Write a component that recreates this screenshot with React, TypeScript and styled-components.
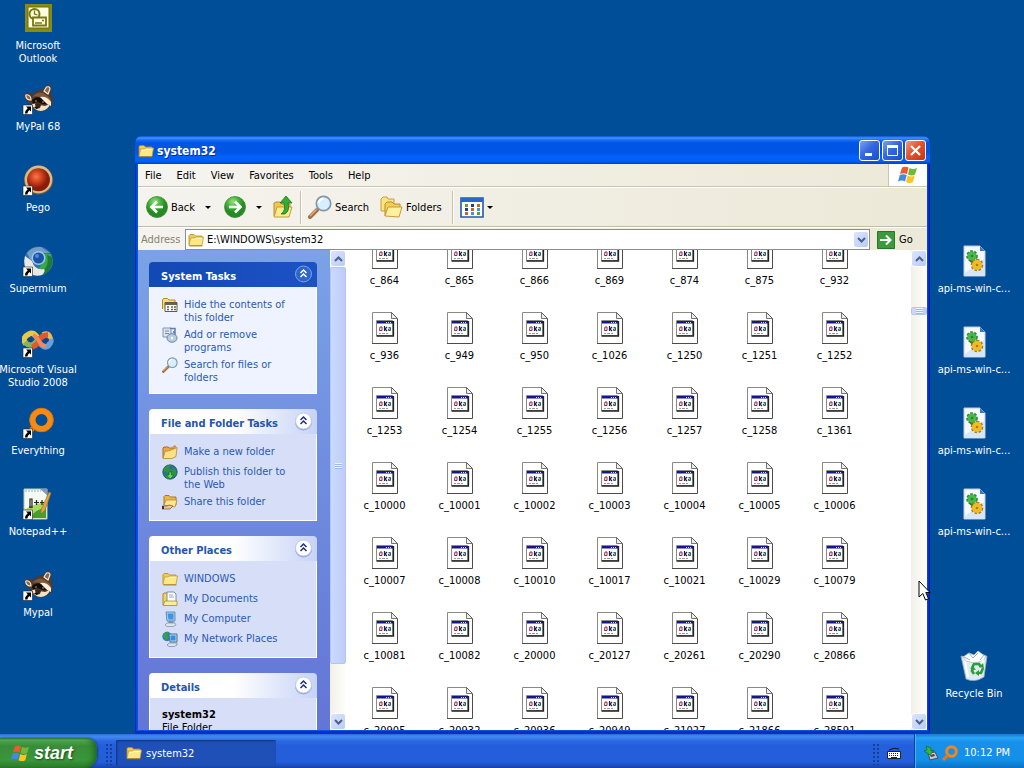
import React from "react";
import styled, { createGlobalStyle, css } from "styled-components";

const uiFont = `"DejaVu Sans Condensed", "Noto Sans", sans-serif`;

const GlobalStyle = createGlobalStyle`
  * { box-sizing: border-box; }
  body { margin: 0; font: 11px/13px ${uiFont}; color: #000; }
  button, input { font: inherit; color: inherit; }
  button { padding: 0; border: 0; background: none; }
  ul, h1, h2, p { margin: 0; padding: 0; font-size: inherit; list-style: none; }
  svg { display: block; flex: none; }
`;

/* ---------- desktop ---------- */

const Screen = styled.div`
  display: flex;
  flex-direction: column;
  height: 100vh;
  overflow: hidden;
  background: #004e98;
`;

const Desktop = styled.main`
  position: relative;
  flex: 1;
  min-height: 0;
  display: flex;
  justify-content: space-between;
`;

const IconColumn = styled.ul`
  display: grid;
  grid-template-columns: 76px;
  grid-auto-rows: 81px;
  align-content: start;
  &:last-of-type { margin-right: 12px; }
`;

const ShortcutCell = styled.li<{ $row?: number }>`
  ${(p) => p.$row && css`grid-row: ${p.$row};`}
`;

const ShortcutButton = styled.button`
  display: flex;
  flex-direction: column;
  align-items: center;
  gap: 5px;
  width: 100%;
  padding-top: 2px;
  color: #fff;
  white-space: pre;
`;

const AppWindow = styled.section`
  position: absolute;
  inset: 136px 94px 0 135px;
  display: flex;
  flex-direction: column;
  padding: 0 3px 4px;
  border-radius: 7px 7px 0 0;
  background: linear-gradient(90deg, #0019cf, #0855dd 2px, #0855dd 3px, #0855dd calc(100% - 3px), #0a32d8 calc(100% - 2px), #001aa8);
  box-shadow: inset 0 -3px 0 #0830c8;
  overflow: hidden;
`;

const TitleBar = styled.header`
  display: flex;
  align-items: center;
  gap: 2px;
  flex: none;
  height: 28px;
  margin: 0 -3px;
  padding: 1px 4px 0 3px;
  background: linear-gradient(#0a4fd0, #3d95ff 2px, #1a6bf5 4px, #0055e5 7px, #0054e3 16px, #0062fb 21px, #0060f8 25px, #0040c8);
`;

const Title = styled.h1`
  flex: 1;
  padding-left: 1px;
  color: #fff;
  font: bold 12px/16px ${uiFont};
  text-shadow: 1px 1px #0a2f8c;
`;

const CaptionButton = styled.button<{ $close?: boolean }>`
  display: grid;
  place-items: center;
  width: 21px;
  height: 21px;
  border: 1px solid #fff;
  border-radius: 3px;
  background: ${(p) =>
    p.$close
      ? "linear-gradient(135deg, #f09a80, #e2532e 45%, #c8340c)"
      : "linear-gradient(135deg, #7ba2f2, #3467e0 45%, #1c4cd0)"};
`;

/* ---------- bars ---------- */

const MenuBar = styled.nav`
  display: flex;
  flex: none;
  height: 23px;
  border-bottom: 1px solid #c9c5b2;
  background: linear-gradient(90deg, #f6f4ef, #ece9d8);
`;

const MenuItems = styled.div`
  display: flex;
  flex: 1;
  gap: 15px;
  padding-left: 7px;
`;

const FlagCell = styled.div`
  display: grid;
  place-items: center;
  width: 39px;
  background: #fff;
  border-left: 1px solid #c9c5b2;
`;

const ToolBar = styled.div`
  display: flex;
  align-items: center;
  flex: none;
  height: 40px;
  padding-left: 8px;
  border-top: 1px solid #fff;
  border-bottom: 1px solid #c0bcaa;
  background: linear-gradient(90deg, #f5f3ee, #ece9d8);
`;

const ToolButton = styled.button<{ $w: number; $before?: number }>`
  display: flex;
  align-items: center;
  gap: 3px;
  width: ${(p) => p.$w}px;
  height: 32px;
  margin-left: ${(p) => p.$before || 0}px;
`;

const Caret = styled.span`
  width: 0;
  border: 3px solid transparent;
  border-top-color: #000;
  border-bottom: 0;
  margin-left: auto;
`;

const BarRule = styled.span`
  width: 2px;
  height: 33px;
  margin: 0 6px;
  border-left: 1px solid #c6c2ae;
  border-right: 1px solid #fff;
`;

const AddressBar = styled.form`
  display: flex;
  align-items: stretch;
  flex: none;
  height: 23px;
  padding-top: 1px;
  border-top: 1px solid #fff;
  background: linear-gradient(90deg, #f5f3ee, #ece9d8);
`;

const AddressLabel = styled.label`
  width: 47px;
  padding: 4px 0 0 3px;
  color: #85826f;
`;

const AddressBox = styled.div`
  display: flex;
  align-items: center;
  gap: 3px;
  flex: 1;
  padding-left: 2px;
  border: 1px solid #8a8d92;
  background: #fff;
`;

const AddressInput = styled.input`
  flex: 1;
  min-width: 0;
  padding: 0;
  border: 0;
  outline: 0;
  background: none;
`;

const GoButton = styled.button`
  display: flex;
  align-items: center;
  gap: 4px;
  width: 57px;
  padding-left: 7px;
`;

/* ---------- window body ---------- */

const Body = styled.div`
  display: flex;
  flex: 1;
  min-height: 0;
  background: #fff;
`;

const SidePane = styled.aside`
  display: flex;
  flex-direction: column;
  gap: 15px;
  flex: none;
  width: 192px;
  padding: 12px 13px 0 11px;
  overflow: hidden;
  background: linear-gradient(#7ba2e7, #6375d6);
`;

const Panel = styled.section`
  flex: none;
`;

const PanelHead = styled.header<{ $primary?: boolean }>`
  display: flex;
  align-items: center;
  justify-content: space-between;
  height: 25px;
  padding: 0 4px 0 12px;
  border-radius: 4px 4px 0 0;
  color: ${(p) => (p.$primary ? "#fff" : "#2456ac")};
  background: ${(p) =>
    p.$primary
      ? "linear-gradient(90deg, #1249b4, #1c52c4)"
      : "linear-gradient(90deg, #fff 50%, #c6d3f7)"};
`;

const PanelTitle = styled.h2`
  padding-top: 3px;
  font-weight: bold;
`;

const PanelBody = styled.div<{ $primary?: boolean }>`
  padding: 10px 12px 6px;
  border: solid #fff;
  border-width: 0 1px 1px;
  background: ${(p) => (p.$primary ? "#eff3ff" : "#d6dff7")};
`;

const TaskItem = styled.li`
  display: flex;
  gap: 6px;
  min-height: 20px;
`;

const TaskLink = styled.a`
  padding: 1px 0 3px;
  color: #2a59b4;
  text-decoration: none;
  white-space: pre;
`;

const ScrollTrack = styled.div`
  display: flex;
  flex-direction: column;
  flex: none;
  width: 16px;
  background: linear-gradient(90deg, #f1f0e8, #fefefb);
`;

const ScrollButton = styled.button`
  display: grid;
  place-items: center;
  flex: none;
  width: 16px;
  height: 17px;
  border: 1px solid #fff;
  border-radius: 3px;
  background: linear-gradient(135deg, #dbe5fe, #b9cbf6);
`;

const ScrollRun = styled.div<{ $before: number; $thumb: number }>`
  display: grid;
  flex: 1;
  grid-template-rows: ${(p) => `${p.$before}fr ${p.$thumb}fr ${446 - p.$before - p.$thumb}fr`};
`;

const Thumb = styled.div`
  display: grid;
  place-items: center;
  grid-row: 2;
  border: 1px solid #b4c6f0;
  border-radius: 2px;
  background: linear-gradient(90deg, #cbd9fd, #bccdf8);
`;

const Grip = styled.span`
  width: 7px;
  height: 6px;
  background: repeating-linear-gradient(#eef4fe 0 1px, #9cb8f0 1px 2px);
`;

const FileArea = styled.div`
  flex: 1;
  min-width: 0;
  overflow: hidden;
`;

const FileGrid = styled.ul`
  display: grid;
  grid-template-columns: repeat(auto-fill, 75px);
  grid-auto-rows: 75px;
  margin-top: -13px;
  padding-left: 1px;
`;

const FileButton = styled.button`
  display: flex;
  flex-direction: column;
  align-items: center;
  gap: 5px;
  width: 100%;
`;

/* ---------- task bar ---------- */

const TaskBar = styled.footer`
  display: flex;
  flex: none;
  height: 34px;
  color: #fff;
  background: linear-gradient(#2b66d0, #4389f0 2px, #3c80ee 4px, #2a68e2 7px, #245edb 12px, #245edb 28px, #1941a5);
`;

const StartButton = styled.button`
  display: flex;
  align-items: center;
  gap: 4px;
  align-self: flex-end;
  width: 97px;
  height: 30px;
  padding: 0 0 0 11px;
  border-radius: 0 10px 12px 0;
  color: #fff;
  font: italic bold 18px/22px "Liberation Sans", sans-serif;
  text-shadow: 1px 1px 2px #1a4a18;
  background: linear-gradient(#2f7a30, #5eac5c 2px, #46a048 4px, #388d38 8px, #3a973a 22px, #2c7c2c);
  box-shadow: inset -5px 0 6px -2px #1e641e, 1px 0 2px #153f9c;
`;

const Dots = styled.span`
  width: 7px;
  margin: 9px 4px 3px 8px;
  background: radial-gradient(circle at 2px 2px, #12409f 1px, transparent 1px) 0 0 / 4px 4px;
`;

const TaskButton = styled.button`
  display: flex;
  align-items: center;
  gap: 4px;
  align-self: flex-end;
  width: 160px;
  height: 26px;
  margin-bottom: 2px;
  padding-left: 10px;
  border-radius: 2px;
  background: #1e50b8;
  box-shadow: inset 1px 1px 2px #0f3388;
`;

const Keyboard = styled.span`
  display: grid;
  place-items: end center;
  width: 34px;
  margin-right: 3px;
  margin-left: -6px;
  padding-bottom: 9px;
`;

const Tray = styled.div`
  display: flex;
  align-items: center;
  gap: 3px;
  width: 110px;
  padding: 3px 0 0 8px;
  border-left: 1px solid #0c3f9e;
  background: linear-gradient(#1877d8, #27a5f4 4px, #1890ec 8px, #1290e8 26px, #0d6fc4);
  box-shadow: inset 1px 0 #3cb8f8;
`;

const Clock = styled.time`
  margin-left: 3px;
`;

const Spacer = styled.span`
  flex: 1;
`;

const Pointer = styled.div`
  position: absolute;
  left: 918px;
  top: 580px;
  pointer-events: none;
`;

/* ---------- drawings ---------- */

const Svg = ({ w, h, box, children }: { w: number; h: number; box?: string; children: React.ReactNode }) => (
  <svg width={w} height={h} viewBox={box || `0 0 ${w} ${h}`} aria-hidden="true">{children}</svg>
);

const Arrow = () => (
  <g>
    <path d="M1 22h9.500v9.500H1z" fill="#fff" stroke="#222" strokeWidth=".6" />
    <path d="M4 23.500H9V28.500L7.500 27Q5.600 28.300 5.400 30.500H3Q3 27.500 5.700 25.300z" fill="#000" />
  </g>
);

const Folder = ({ s = 16 }: { s?: number }) => (
  <Svg w={s} h={s} box="0 0 16 16">
    <path d="M1 13V3.500L2 2.500h4l1.500 1.500H14v3" fill="#f0cc50" stroke="#b48a28" strokeWidth=".8" />
    <path d="M1 13.500 2.500 6h4l1-1h8L14 13.500z" fill="#ffe782" stroke="#c19a35" strokeWidth=".8" />
    <path d="M3.500 7.300h3.200l1-1h6" stroke="#fffbd8" fill="none" />
    <path d="M1.500 14h13" stroke="#8f6a20" strokeWidth=".7" />
  </Svg>
);

const Outlook = () => (
  <Svg w={32} h={32}>
    <path d="M3 2h27v28H3z" fill="#8a8b12" />
    <path d="M6 5h21v21H6z" fill="#fffde0" stroke="#6b6c08" />
    <circle cx="12.500" cy="12" r="5" fill="#fffde0" stroke="#77780c" strokeWidth="2" />
    <path d="M12.500 8.500V12l3 1" stroke="#77780c" fill="none" strokeWidth="1.300" />
    <path d="M11 15.500h13v8H11z" fill="#fffde0" stroke="#77780c" strokeWidth="1.800" />
    <path d="M13 21h7M20 18.500h2" stroke="#77780c" strokeWidth="1.500" />
  </Svg>
);

const Raccoon = () => (
  <Svg w={32} h={32}>
    <path d="M3 13Q3 9 7 10l4 1Q16 6 22 6l3-4q4-1 4 3v6q3 5 1 11-4 5-11 6-8 0-11-8-5-2-5-7z" fill="#54392a" />
    <path d="M4 14Q3 11 6 12q3 1 3 5-4 0-5-3zM24.500 4q3.500-1 3.500 2l-2 5-4-3z" fill="#8a6548" stroke="#f4e6cc" strokeWidth="1.200" />
    <path d="M10 14q6-6 11-4l6 4q3 4 2 7l-7-5q-6-4-12-2z" fill="#7d5a40" />
    <path d="M18 14q7-1 11 5v4l-6-3z" fill="#fbeed4" />
    <path d="M10 17q4-4 9-2l6 6q-4 1-7-1-4-2-7 1z" fill="#120d0b" />
    <path d="M10 21q4-1 7 1l6 1 5-2q-2 6-9 7-7 0-9-7z" fill="#f6e2c2" />
    <path d="M13 21q4-2 6 1l-1 3-4 1z" fill="#3d2418" />
    <path d="M12 24q3-1 4 1-2 2-4-1z" fill="#0d0908" />
    <circle cx="14" cy="18" r=".8" fill="#e0a04a" /><circle cx="21" cy="19" r=".8" fill="#e0a04a" />
    <Arrow />
  </Svg>
);

const Pego = () => (
  <Svg w={32} h={32}>
    <defs><radialGradient id="ball" cx=".4" cy=".35"><stop stopColor="#f8794a" /><stop offset=".5" stopColor="#d0421f" /><stop offset="1" stopColor="#8a1c0c" /></radialGradient></defs>
    <circle cx="16.500" cy="16" r="14.500" fill="#7c5428" /><circle cx="16.500" cy="15.500" r="12.600" fill="none" stroke="#dbb988" strokeWidth="2.600" />
    <circle cx="16.500" cy="16" r="11.300" fill="url(#ball)" /><Arrow />
  </Svg>
);

const Supermium = () => (
  <Svg w={32} h={32}>
    <circle cx="16.500" cy="16" r="14.500" fill="#3a70a0" />
    <path d="M16 9h13q5 14-9 21l-5-4 7-10z" fill="#38a848" />
    <path d="m25 10 5 2q2 12-9 18l-2-3q9-5 6-17z" fill="#1f7a38" />
    <path d="M3 11q-3 11 5 18 6 3 12 1 4-4 2-6-9 2-12-8z" fill="#e8e8e4" />
    <path d="M5 8q5-7 14-6l9 6H14L9 16z" fill="#6f9fc4" />
    <circle cx="16.500" cy="13" r="7" fill="#9cc8ea" /><circle cx="16.500" cy="13" r="5.500" fill="#1a52a8" /><circle cx="15" cy="11" r="2" fill="#4c8ada" />
    <Arrow />
  </Svg>
);

const VisualStudio = () => (
  <Svg w={32} h={32}>
    <g fill="none" strokeWidth="5.500">
      <path d="M16 13Q12 5 7 8-1 12 4 18" stroke="#e5cb45" />
      <path d="M3 16q6 7 12-1" stroke="#87b45c" />
      <path d="M17 16q5 7 9 4 5-5 1-9" stroke="#6ba0dc" />
      <path d="M21 9q6-3 7 4" stroke="#e8b85c" />
      <path d="M10 21q6-2 7-7 3-5 9-5" stroke="#e0582f" />
      <path d="M11 9q4 2 6 6 2 5 7 5" stroke="#f0885a" strokeWidth="4" />
    </g>
    <circle cx="8" cy="14" r="2" fill="#173f82" /><circle cx="25" cy="14" r="2" fill="#173f82" /><Arrow />
  </Svg>
);

const Everything = () => (
  <Svg w={32} h={32}>
    <circle cx="19.500" cy="13" r="9" fill="none" stroke="#f78a14" strokeWidth="6" />
    <circle cx="19.500" cy="13" r="11.800" fill="none" stroke="#d96c08" strokeWidth=".8" />
    <path d="m11 21-5 6" stroke="#f07a10" strokeWidth="5" /><Arrow />
  </Svg>
);

const Notepad = () => (
  <Svg w={32} h={32}>
    <path d="M2 1h23v30H2z" fill="#f6f9f0" stroke="#bcc6ae" />
    <path d="M2 22q9-6 22-8v16H2z" fill="#a8d860" /><path d="M8 30q5-9 16-10v10z" fill="#43a028" />
    <path d="M3 3h16" stroke="#b8d8e8" strokeWidth="2" strokeDasharray="2 1" />
    <path d="M18 1h7v6z" fill="#8498b8" />
    <path d="M8 20V11h2v9M7 19h3M12 14.500h5M14.500 12v5M18 14.500h4M20 12v5" stroke="#222" fill="none" strokeWidth="1.200" />
    <path d="m19 22 8-18 2 1-6 17-4 4z" fill="#e5a23a" stroke="#a06c28" strokeWidth=".6" /><Arrow />
  </Svg>
);

const Gear = ({ x, y, r, c, d }: { x: number; y: number; r: number; c: string; d: string }) => (
  <g>
    <circle cx={x} cy={y} r={r} fill={c} stroke={d} strokeWidth="2.600" strokeDasharray="2.400 1.400" />
    <circle cx={x} cy={y} r={r} fill={c} /><circle cx={x} cy={y} r="1.300" fill={d} />
  </g>
);

const Dll = () => (
  <Svg w={32} h={32}>
    <path d="M6 1h16l5 5v25H6z" fill="#f5f9ff" stroke="#b5cceb" />
    <path d="M22 1v5h5z" fill="#3a77bd" /><path d="M7 28 26 14v16H7z" fill="#d8e6fa" />
    <Gear x={14} y={11} r={4.5} c="#48b848" d="#2a8232" />
    <path d="M10 14q5 3 9 0l1 4-6 1z" fill="#2a8232" />
    <Gear x={19} y={20} r={5} c="#f0bc26" d="#b07e14" />
  </Svg>
);

const RecycleBin = () => (
  <Svg w={32} h={32}>
    <path d="m3 6 13 3 13-3-3 21q-9 6-18 2z" fill="#dfeaf2" stroke="#91a9bc" strokeWidth=".8" />
    <path d="m5 7 6-4 5 2 4-4 4 3 4 2-3 5-9 2-8-2z" fill="#fff" stroke="#aebfca" strokeWidth=".8" />
    <path d="m11 3 4 5 5-5M6 7l6 3M26 5l-4 5" stroke="#9eb0b8" fill="none" />
    <path d="M7 11 10 27M25 10 22 26" stroke="#fff" strokeWidth="2" />
    <g fill="none" stroke="#2b9c37" strokeWidth="2.600"><path d="m14 18 2-4h5l2 3M25 18l-2 5h-3M16 24l-2-3 1-3" /></g>
    <path d="m21 17 5 1-1-5zM21 20v6l-4-3zM12 19l3-3 3 4z" fill="#2b9c37" />
  </Svg>
);

const NlsFile = () => (
  <Svg w={26} h={32}>
    <path d="M.5.500h19l6 6.500v24.500H.5z" fill="#fff" />
    <path d="M.5 31V.500h19" stroke="#8a8a84" fill="none" />
    <path d="M0 31.500h25.500V7" stroke="#4c4c48" fill="none" />
    <path d="M19.500.500V6.500h6zl6 6" stroke="#55554f" fill="#eee" strokeWidth=".8" />
    <path d="M4.500 8.500h16v15h-16z" fill="#fff" stroke="#8c8c84" />
    <path d="M5 9h16v2.500H5z" fill="#14168c" /><path d="M14 10h1v1h-1zM16 10h1v1h-1zM18 10h1v1h-1z" fill="#dde" />
    <path d="M4.500 24h17V9" stroke="#222" fill="none" strokeWidth="1.300" />
    <path d="M8 15h2v3.500H7.500z" stroke="#8c2b42" fill="none" />
    <path d="M12.500 14v5M15 15l-2 2 2 2" stroke="#202050" fill="none" strokeWidth="1.200" />
    <path d="M16.500 15.500h2v3h-2v-1.500h2" stroke="#28625e" fill="none" />
    <path d="M7 21.500h2m1 0h3m1 0h2" stroke="#999" />
  </Svg>
);

const RoundArrow = ({ back }: { back?: boolean }) => (
  <Svg w={22} h={22}>
    <defs><radialGradient id="green" cx=".4" cy=".25"><stop stopColor="#9be07e" /><stop offset=".5" stopColor="#4cb840" /><stop offset="1" stopColor="#268a24" /></radialGradient></defs>
    <circle cx="11" cy="11" r="10.500" fill="url(#green)" stroke="#3d8a36" strokeWidth=".8" />
    <path d={back ? "M17 11H6M11 5.500 5.500 11 11 16.500" : "M5 11h11M11 5.500 16.500 11 11 16.500"} stroke="#fff" strokeWidth="2.600" fill="none" />
  </Svg>
);

const UpFolder = () => (
  <Svg w={22} h={24}>
    <path d="M2 21V8l2-1h4l2 2h8v4" fill="#efc94f" stroke="#b78e2c" /><path d="m2 22 3-10h15l-3 10z" fill="#ffeb92" stroke="#c39b3a" />
    <path d="M9 19q5-3 3-11H8l6-7 6 7h-4q2 8-3 11z" fill="#35ad32" stroke="#1a7420" strokeWidth=".8" />
  </Svg>
);

const Magnifier = ({ s = 24 }: { s?: number }) => (
  <Svg w={s} h={s} box="0 0 24 24">
    <path d="m9 15-7 7" stroke="#a57243" strokeWidth="4" strokeLinecap="round" /><path d="m8.500 14.500-6.500 6.500" stroke="#e4b384" strokeWidth="1.300" />
    <circle cx="15.500" cy="8.500" r="7.200" fill="#d7effb" stroke="#8196aa" strokeWidth="1.700" />
    <path d="M10.500 8q1-4 5-4.500" stroke="#fff" strokeWidth="2" fill="none" />
  </Svg>
);

const FoldersIcon = () => (
  <Svg w={23} h={22}>
    <path d="M1 15V3l2-2h4l1 2h6v12z" fill="#fbe283" stroke="#c8a040" />
    <path d="M5 20V8l2-2h5l2 2h6v4" fill="#f3cf58" stroke="#b78e2c" /><path d="m5 20 3-9h14l-3 10z" fill="#fff0a0" stroke="#c39b3a" />
  </Svg>
);

const ViewsIcon = () => (
  <Svg w={24} h={21}>
    <path d="M1 1h22v19H1z" fill="#fff" stroke="#2059ad" strokeWidth="1.600" /><path d="M1 1h22v4H1z" fill="#2868c8" />
    {[5, 11, 17].map((x, i) => [7, 11, 15].map((y, j) => <path key={`${x}-${y}`} d={`M${x} ${y}h3v3h-3z`} fill={["#6a9a40", "#253f88", "#b36d30", "#5b8cd0"][(i + j) % 4]} />))}
  </Svg>
);

const Flag = ({ s = 20 }: { s?: number }) => (
  <Svg w={s} h={s} box="0 0 20 20">
    <path d="M4 2.500q3.500-1.700 6.500 0L9 9Q6 7.500 2 9z" fill="#ee5a2c" /><path d="M11.500 3q3.500 2 7.500 0l-2 6.500q-3 2-7 0z" fill="#70b83c" />
    <path d="M1.800 10q3.500-1.700 7 0L7 16.500q-3-1.800-7 0z" fill="#4489e8" /><path d="M9.700 10.500q3.600 2 7 0L15 17q-3 2-7 0z" fill="#fbc524" />
  </Svg>
);

const Chevrons = ({ primary }: { primary?: boolean }) => (
  <Svg w={19} h={19}>
    <circle cx="9.500" cy="10" r="8.500" fill={primary ? "#184cae" : "#8fa4d8"} />
    <circle cx="9.500" cy="9" r="8" fill={primary ? "#2e66cc" : "#fff"} stroke={primary ? "#7fa4ea" : "#c4cde8"} />
    <path d="m6.500 8 3-3 3 3M6.500 12l3-3 3 3" stroke={primary ? "#fff" : "#1d2f78"} strokeWidth="1.500" fill="none" />
  </Svg>
);

const Tick = ({ up }: { up?: boolean }) => (
  <Svg w={9} h={6}><path d={up ? "m1 5 3.500-3.500L8 5" : "m1 1 3.500 3.500L8 1"} stroke="#4d6185" strokeWidth="2" fill="none" /></Svg>
);

const HideIcon = () => (
  <Svg w={16} h={16}><path d="M.5 12V3l1-1.500h4L7 3h6v9" fill="#f6dd76" stroke="#b08a2e" />
    <path d="M3 5.500h12v9H3z" fill="#fff" stroke="#5f5b48" /><path d="M3 6h12v2H3z" fill="#67634f" /><path d="M5 10h2m2 0h2m1 0h2M5 12.500h2m2 0h2m1 0h2" stroke="#67634f" strokeWidth="1.500" /></Svg>
);
const ProgramsIcon = () => (
  <Svg w={16} h={16}><path d="M1 1h8v9H1z" fill="#dde4ee" stroke="#8294a8" /><path d="M3 4h4M3 6.500h4" stroke="#7088a8" />
    <ellipse cx="10" cy="11" rx="5" ry="4.300" fill="#b7cde2" stroke="#6d86a0" /><circle cx="10" cy="11" r="1.300" fill="#fff" /><path d="M8 1.500h5v5l-2-2" stroke="#5b7fae" fill="none" strokeWidth="1.500" /></Svg>
);
const NewFolderIcon = () => (
  <Svg w={16} h={16}><path d="M1 14V4l1-1h4l1.500 1H13v3" fill="#e8a848" stroke="#a46c20" /><path d="m1 14.500 2-7 5-1 7-3-1 9-4 2z" fill="#ffe083" stroke="#b98730" strokeWidth=".8" /><path d="m10 3 3-2 2 3" fill="#d98a38" /></Svg>
);
const GlobeIcon = () => (
  <Svg w={16} h={16}><circle cx="8" cy="8" r="7.300" fill="#2b6f98" stroke="#1b4a50" strokeWidth=".6" /><path d="M2 4q4-4 7-3l-2 3 3 2-4 3-4-1zM11 3l3 3 .5 4-3 3-2-3zM4 10l4 2-1 3q-3-1-4-4z" fill="#2f9245" /><path d="m8 15-3.500-4H7V8h2.500v3H12z" fill="#5ddd52" stroke="#18702a" strokeWidth=".7" /></Svg>
);
const ShareIcon = () => (
  <Svg w={16} h={16}><path d="M2 11V2.500L3 1.500h4L8.500 3H14v8" fill="#e8b84a" stroke="#a5782a" /><path d="m2 11 2-5h11l-2 7z" fill="#ffe68c" stroke="#b98730" strokeWidth=".8" /><path d="M0 12h5l2-1 4 1-3 3H0z" fill="#efc69c" stroke="#704d30" strokeWidth=".7" /><path d="M0 12h2v3H0z" fill="#3d3230" /></Svg>
);
const DocsIcon = () => (
  <Svg w={16} h={16}><path d="M1 14V3l1-1h3l1 2v10" fill="#f3d264" stroke="#af862d" /><path d="M5 1h7l2 2v9H5z" fill="#fff" stroke="#798ca8" /><path d="M7 4h4M7 6h5" stroke="#90a8cc" /><path d="M1 14.500 3 10h12v4.500z" fill="#ffeb9c" stroke="#af862d" strokeWidth=".8" /></Svg>
);
const ComputerIcon = () => (
  <Svg w={16} h={16}><path d="M4 1h9v9H5z" fill="#9ed0f4" stroke="#6c8fb0" /><path d="M5.500 2.500h6v6h-5z" fill="#3f95e4" /><path d="M7 10h4l1 2H6z" fill="#7491b0" /><path d="m3 14 2-2h8l1 2-3 1.500H5z" fill="#dae4ed" stroke="#7e8fa2" strokeWidth=".7" /></Svg>
);
const NetworkIcon = () => (
  <Svg w={16} h={16}><circle cx="5" cy="5.500" r="4.700" fill="#2f7cc4" /><path d="M1 4q3-4 6-3L5 4l2 2-3 3-3-3z" fill="#34a345" /><path d="M7 3h8v8H8z" fill="#b0dcf8" stroke="#51708f" /><path d="M8.500 4.500h5v5h-5z" fill="#358fdc" /><path d="m5 14 2-2h8v2l-3 1.500H7z" fill="#dae4ed" stroke="#71849a" strokeWidth=".7" /></Svg>
);

/* ---------- data ---------- */

const leftShortcuts = [
  { name: "Microsoft\nOutlook", icon: <Outlook /> },
  { name: "MyPal 68", icon: <Raccoon /> },
  { name: "Pego", icon: <Pego /> },
  { name: "Supermium", icon: <Supermium /> },
  { name: "Microsoft Visual\nStudio 2008", icon: <VisualStudio /> },
  { name: "Everything", icon: <Everything /> },
  { name: "Notepad++", icon: <Notepad /> },
  { name: "Mypal", icon: <Raccoon /> },
];

const rightShortcuts = [
  ...[4, 5, 6, 7].map((row) => ({ name: "api-ms-win-c...", icon: <Dll />, row })),
  { name: "Recycle Bin", icon: <RecycleBin />, row: 9 },
];

const panels = [
  { title: "System Tasks", primary: true, tasks: [
    ["Hide the contents of\nthis folder", <HideIcon />],
    ["Add or remove\nprograms", <ProgramsIcon />],
    ["Search for files or\nfolders", <Magnifier s={16} />],
  ] },
  { title: "File and Folder Tasks", tasks: [
    ["Make a new folder", <NewFolderIcon />],
    ["Publish this folder to\nthe Web", <GlobeIcon />],
    ["Share this folder", <ShareIcon />],
  ] },
  { title: "Other Places", tasks: [
    ["WINDOWS", <Folder />],
    ["My Documents", <DocsIcon />],
    ["My Computer", <ComputerIcon />],
    ["My Network Places", <NetworkIcon />],
  ] },
] as { title: string; primary?: boolean; tasks: [string, React.ReactNode][] }[];

const codePages = `864 865 866 869 874 875 932 936 949 950 1026 1250 1251 1252
1253 1254 1255 1256 1257 1258 1361 10000 10001 10002 10003 10004 10005 10006
10007 10008 10010 10017 10021 10029 10079 10081 10082 20000 20127 20261 20290 20866
20905 20932 20936 20949 21027 21866 28591`.split(/\s+/);

/* ---------- parts ---------- */

const Shortcut = ({ name, icon, row }: { name: string; icon: React.ReactNode; row?: number }) => (
  <ShortcutCell $row={row}><ShortcutButton>{icon}<span>{name}</span></ShortcutButton></ShortcutCell>
);

const PanelHeader = ({ title, primary }: { title: string; primary?: boolean }) => (
  <PanelHead $primary={primary}>
    <PanelTitle>{title}</PanelTitle>
    <button aria-label={`Collapse ${title}`}><Chevrons primary={primary} /></button>
  </PanelHead>
);

const ScrollBar = ({ before, thumb }: { before: number; thumb: number }) => (
  <ScrollTrack>
    <ScrollButton aria-label="Scroll up"><Tick up /></ScrollButton>
    <ScrollRun $before={before} $thumb={thumb}><Thumb><Grip /></Thumb></ScrollRun>
    <ScrollButton aria-label="Scroll down"><Tick /></ScrollButton>
  </ScrollTrack>
);

export default function App() {
  return (
    <Screen>
      <GlobalStyle />
      <Desktop>
        <IconColumn>{leftShortcuts.map((s) => <Shortcut key={s.name} {...s} />)}</IconColumn>
        <IconColumn>{rightShortcuts.map((s) => <Shortcut key={s.row} {...s} />)}</IconColumn>

        <AppWindow>
          <TitleBar>
            <Folder />
            <Title>system32</Title>
            <CaptionButton aria-label="Minimize"><Svg w={15} h={15}><path d="M3 10h7v3H3z" fill="#fff" /></Svg></CaptionButton>
            <CaptionButton aria-label="Maximize"><Svg w={15} h={15}><path d="M2.500 3.500h10v9h-10z" stroke="#fff" fill="none" /><path d="M2 2h11v3H2z" fill="#fff" /></Svg></CaptionButton>
            <CaptionButton $close aria-label="Close"><Svg w={15} h={15}><path d="m3 3 9 9M12 3l-9 9" stroke="#fff" strokeWidth="2.200" /></Svg></CaptionButton>
          </TitleBar>

          <MenuBar>
            <MenuItems>
              {["File", "Edit", "View", "Favorites", "Tools", "Help"].map((m) => <button key={m}>{m}</button>)}
            </MenuItems>
            <FlagCell><Flag /></FlagCell>
          </MenuBar>

          <ToolBar>
            <ToolButton $w={65}><RoundArrow back />Back<Caret /></ToolButton>
            <ToolButton $w={38} $before={13} aria-label="Forward"><RoundArrow /><Caret /></ToolButton>
            <ToolButton $w={22} $before={10} aria-label="Up"><UpFolder /></ToolButton>
            <BarRule />
            <ToolButton $w={72}><Magnifier />Search</ToolButton>
            <ToolButton $w={66}><FoldersIcon />Folders</ToolButton>
            <BarRule />
            <ToolButton $w={32} aria-label="Views"><ViewsIcon /><Caret /></ToolButton>
          </ToolBar>

          <AddressBar onSubmit={(e) => e.preventDefault()}>
            <AddressLabel htmlFor="address">Address</AddressLabel>
            <AddressBox>
              <Folder />
              <AddressInput id="address" defaultValue="E:\WINDOWS\system32" />
              <ScrollButton type="button" aria-label="Show addresses"><Tick /></ScrollButton>
            </AddressBox>
            <GoButton>
              <Svg w={18} h={18}><path d="M.5.500h17v17H.5z" fill="#3a9a3c" stroke="#2a742c" /><path d="M3 9h10M9 4.500 13.500 9 9 13.500" stroke="#fff" strokeWidth="2" fill="none" /></Svg>
              Go
            </GoButton>
          </AddressBar>

          <Body>
            <SidePane>
              {panels.map((p) => (
                <Panel key={p.title}>
                  <PanelHeader title={p.title} primary={p.primary} />
                  <PanelBody $primary={p.primary}>
                    <ul>
                      {p.tasks.map(([text, icon]) => (
                        <TaskItem key={text}>{icon}<TaskLink href="#">{text}</TaskLink></TaskItem>
                      ))}
                    </ul>
                  </PanelBody>
                </Panel>
              ))}
              <Panel>
                <PanelHeader title="Details" />
                <PanelBody>
                  <p><strong>system32</strong></p>
                  <p>File Folder</p>
                </PanelBody>
              </Panel>
            </SidePane>
            <ScrollBar before={0} thumb={397} />
            <FileArea>
              <FileGrid>
                {codePages.map((n) => (
                  <li key={n}><FileButton><NlsFile />{`c_${n}`}</FileButton></li>
                ))}
              </FileGrid>
            </FileArea>
            <ScrollBar before={40} thumb={8} />
          </Body>
        </AppWindow>

        <Pointer>
          <Svg w={13} h={21}><path d="M1 1v16l3.800-3.500L7.500 20l3-1.300L7.800 12.500H12z" fill="#fff" stroke="#000" /></Svg>
        </Pointer>
      </Desktop>

      <TaskBar>
        <StartButton><Flag s={19} />start</StartButton>
        <Dots />
        <TaskButton><Folder />system32</TaskButton>
        <Spacer />
        <Dots />
        <Keyboard><Svg w={14} h={12}><path d="M2 3Q7 0 12 2" stroke="#111" fill="none" /><path d="M.5 4.500h13v7H.5z" fill="#fff" stroke="#222" /><path d="M2 6.500h10M2 8.500h10" stroke="#222" strokeDasharray="1 1" /><path d="M4 10.500h6" stroke="#222" /></Svg></Keyboard>
        <Tray>
          <Svg w={16} h={16}><path d="m5 8 7-1 3 6-8 2z" fill="#c3cad0" stroke="#444d55" /><path d="m7 10 4-1 1 2-4 1z" fill="#445" /><path d="m7 10-6-4 3-1-1-4 5 2v3l3-1z" fill="#38b53a" stroke="#15691d" strokeWidth=".7" /></Svg>
          <Svg w={16} h={16}><circle cx="9.500" cy="6.500" r="4.800" fill="none" stroke="#f58516" strokeWidth="3" /><path d="m6 10-5 5" stroke="#f07408" strokeWidth="3" /></Svg>
          <Clock>10:12 PM</Clock>
        </Tray>
      </TaskBar>
    </Screen>
  );
}
